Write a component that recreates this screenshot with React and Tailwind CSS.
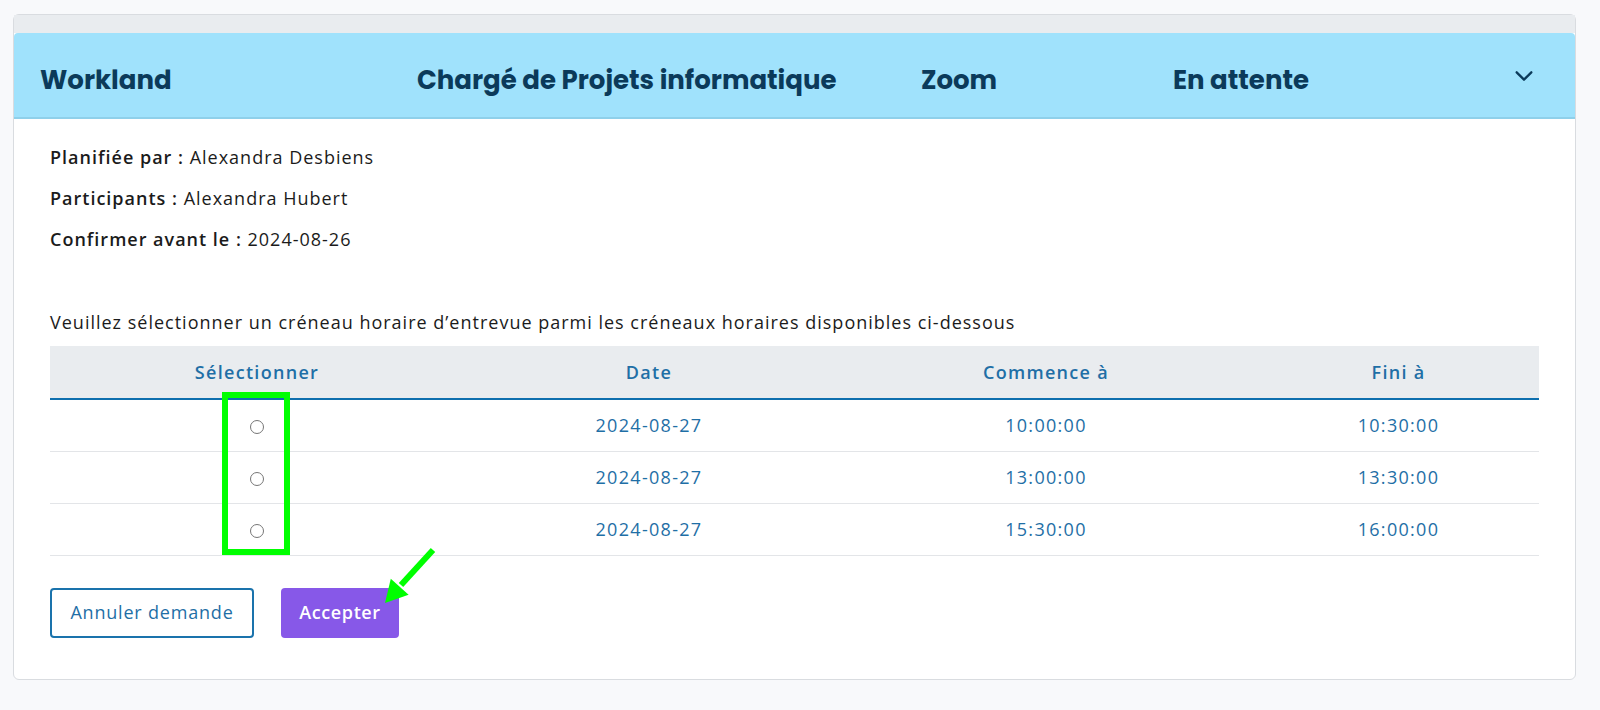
import React from "react";

const slots = [
  { date: "2024-08-27", start: "10:00:00", end: "10:30:00" },
  { date: "2024-08-27", start: "13:00:00", end: "13:30:00" },
  { date: "2024-08-27", start: "15:30:00", end: "16:00:00" },
];

export default function App() {
  return (
    <div className="min-h-[710px] bg-[#f8f9fb] pt-[14px] pl-[13px]">
      <div className="relative w-[1563px] bg-white border border-[#d9dce0] rounded-md">
        <div className="h-[18px] bg-[#e9ecef]" />
        {/* header */}
        <div className="h-[86px] bg-[#a0e2fc] border-b-2 border-[#8fd0ea] rounded-t-sm flex items-center pt-[10px] pl-[26px] pr-[40px] text-[#0b3a5a] text-[26px] font-bold" style={{ fontFamily: "Poppins, Inter, sans-serif" }}>
          <div className="w-[377px]">Workland</div>
          <div className="w-[504px]">Chargé de Projets informatique</div>
          <div className="w-[252px]">Zoom</div>
          <div className="flex-1">En attente</div>
          <svg width="22" height="22" viewBox="0 0 24 24" fill="none" stroke="#0b3a5a" strokeWidth="2.5" strokeLinecap="round" strokeLinejoin="round" className="-mt-[8px]">
            <path d="M4 8l8 8 8-8" />
          </svg>
        </div>

        {/* body */}
        <div className="px-[36px] pt-[26px] pb-[41px] text-[18px] tracking-[1px] text-[#1b1b1b]" style={{ fontFamily: "'Open Sans', sans-serif" }}>
          <div className="flex flex-col gap-[17px] leading-[24px]">
            <p><span className="font-semibold">Planifiée par :</span> Alexandra Desbiens</p>
            <p><span className="font-semibold">Participants :</span> Alexandra Hubert</p>
            <p><span className="font-semibold">Confirmer avant le :</span> 2024-08-26</p>
          </div>
          <p className="mt-[59px] leading-[24px]">Veuillez sélectionner un créneau horaire d’entrevue parmi les créneaux horaires disponibles ci-dessous</p>

          <table className="mt-[12px] w-full border-collapse text-[18px] tracking-[1.3px] text-[#1f6fa6]">
            <thead>
              <tr className="bg-[#e9ecef] h-[53px] border-b-2 border-[#0e6fae]">
                <th className="w-[414px] font-semibold">Sélectionner</th>
                <th className="w-[370px] font-semibold">Date</th>
                <th className="w-[424px] font-semibold">Commence à</th>
                <th className="font-semibold">Fini à</th>
              </tr>
            </thead>
            <tbody>
              {slots.map((s, i) => (
                <tr key={i} className="h-[52px] border-b border-[#e3e5e8]">
                  <td className="text-center">
                    <span className="inline-block w-[14px] h-[14px] rounded-full border border-[#767676] align-middle" />
                  </td>
                  <td className="text-center">{s.date}</td>
                  <td className="text-center">{s.start}</td>
                  <td className="text-center">{s.end}</td>
                </tr>
              ))}
            </tbody>
          </table>

          <div className="mt-[32px] flex gap-[27px]">
            <button className="h-[50px] w-[204px] border-2 border-[#1a73ac] rounded-[4px] text-[#1f6fa6] text-[18px] tracking-[0.8px]">Annuler demande</button>
            <button className="h-[50px] w-[118px] bg-[#8758e8] rounded-[4px] text-white font-semibold text-[18px] tracking-[0.6px]">Accepter</button>
          </div>
        </div>

        {/* annotations */}
        <div className="absolute left-[208px] top-[377px] w-[68px] h-[163px] border-[6px] border-[#00ff00]" />
        <svg className="absolute left-[360px] top-[530px]" width="70" height="65" viewBox="0 0 70 65">
          <path d="M59 5 L27 40" stroke="#00ff00" strokeWidth="6" />
          <path d="M11 58 L16.8 33.7 L34.6 49.7 Z" fill="#00ff00" />
        </svg>
      </div>
    </div>
  );
}
